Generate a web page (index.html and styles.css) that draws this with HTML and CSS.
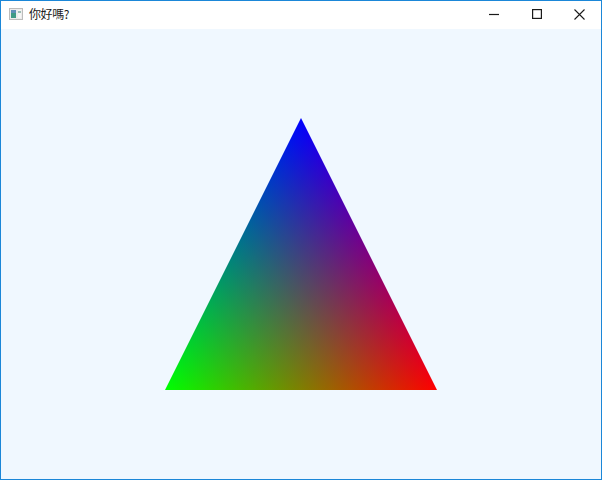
FILE: index.html
```html
<!DOCTYPE html>
<html lang="zh-Hant">
<head>
<meta charset="utf-8">
<title>你好嗎?</title>
<link rel="stylesheet" href="styles.css">
</head>
<body>
<div class="window">
  <header class="titlebar">
    <svg class="app-icon" width="14" height="12" viewBox="0 0 14 12" aria-hidden="true">
      <rect x="0.5" y="0.5" width="13" height="11" fill="#ececec" stroke="#bcbcbc"/>
      <rect x="2" y="2" width="5" height="8" fill="#3f9a86"/>
      <rect x="2" y="2" width="5" height="3" fill="#5f8fb8"/>
      <rect x="9" y="2" width="3" height="8" fill="#f6f6f6"/>
      <rect x="9" y="3" width="3" height="2" fill="#9dbdb4"/>
    </svg>
    <span class="title">你好嗎?</span>
    <div class="controls">
      <button class="control" aria-label="Minimize">
        <svg width="10" height="10" viewBox="0 0 10 10"><path d="M0 5.5H10" stroke="#1a1a1a" stroke-width="1.2" fill="none"/></svg>
      </button>
      <button class="control" aria-label="Maximize">
        <svg width="10" height="10" viewBox="0 0 10 10"><rect x="0.6" y="0.6" width="8.8" height="8.8" stroke="#1a1a1a" stroke-width="1.2" fill="none"/></svg>
      </button>
      <button class="control" aria-label="Close">
        <svg width="11" height="11" viewBox="0 0 11 11"><path d="M0.5 0.5L10.5 10.5M10.5 0.5L0.5 10.5" stroke="#1a1a1a" stroke-width="1.1" fill="none"/></svg>
      </button>
    </div>
  </header>
  <main class="client">
    <svg class="scene" width="600" height="450" viewBox="1 29 600 450" aria-hidden="true">
      <defs>
        <linearGradient id="red" gradientUnits="userSpaceOnUse" x1="437" y1="390" x2="219.4" y2="281.2">
          <stop offset="0" stop-color="#ff0000"/><stop offset="1" stop-color="#000000"/>
        </linearGradient>
        <linearGradient id="green" gradientUnits="userSpaceOnUse" x1="165" y1="390" x2="382.6" y2="281.2">
          <stop offset="0" stop-color="#00ff00"/><stop offset="1" stop-color="#000000"/>
        </linearGradient>
        <linearGradient id="blue" gradientUnits="userSpaceOnUse" x1="301" y1="118" x2="301" y2="390">
          <stop offset="0" stop-color="#0000ff"/><stop offset="1" stop-color="#000000"/>
        </linearGradient>
        <clipPath id="tri"><polygon points="301,118 437,390 165,390"/></clipPath>
      </defs>
      <g class="triangle" clip-path="url(#tri)">
        <rect x="160" y="110" width="282" height="285" fill="#000000"/>
        <rect class="additive" x="160" y="110" width="282" height="285" fill="url(#red)"/>
        <rect class="additive" x="160" y="110" width="282" height="285" fill="url(#green)"/>
        <rect class="additive" x="160" y="110" width="282" height="285" fill="url(#blue)"/>
      </g>
    </svg>
  </main>
</div>
</body>
</html>
```
FILE: styles.css
```css
* { box-sizing: border-box; }
html, body { margin: 0; padding: 0; }
body { width: 602px; height: 480px; overflow: hidden; }
.window {
  width: 602px;
  height: 480px;
  display: flex;
  flex-direction: column;
  border: 1px solid #1b87d8;
  background: #f0f8ff;
}
.titlebar {
  height: 28px;
  flex: none;
  display: flex;
  align-items: center;
  background: #ffffff;
  padding-left: 8px;
}
.app-icon { flex: none; margin-right: 6px; margin-bottom: 2px; }
.title {
  font-family: "Noto Sans CJK TC", "Noto Sans", sans-serif;
  font-size: 12px;
  line-height: 16px;
  letter-spacing: -0.4px;
  color: #1a1a1a;
  margin-bottom: 3px;
}
.controls { display: flex; margin-left: auto; height: 100%; padding-bottom: 2px; }
.control {
  width: 43px;
  height: 100%;
  padding: 0;
  border: 0;
  background: transparent;
  display: flex;
  align-items: center;
  justify-content: center;
}
.client { flex: 1; background: #f0f8ff; }
.scene { display: block; }
.triangle { isolation: isolate; }
.additive { mix-blend-mode: screen; }
```
